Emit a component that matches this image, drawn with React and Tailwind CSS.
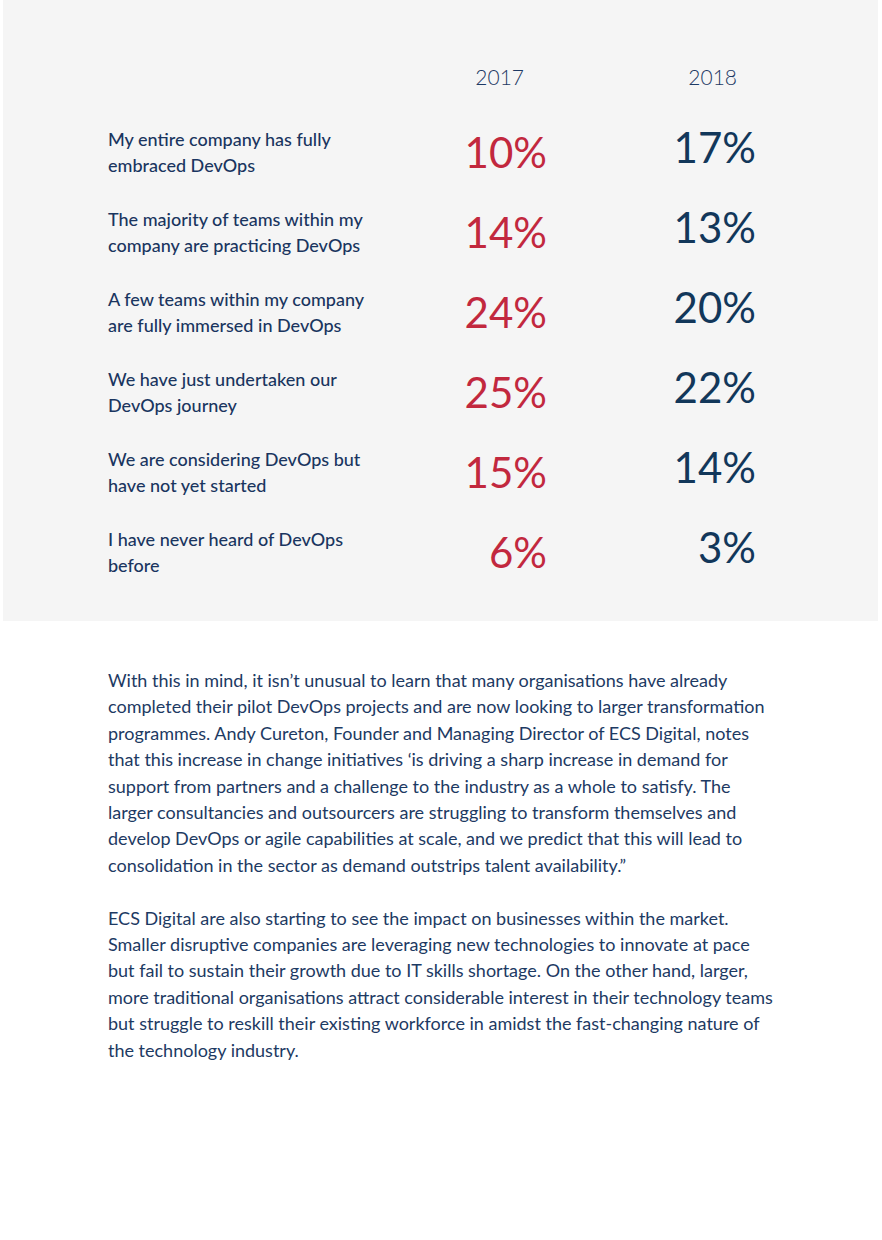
import React from 'react';

const rows = [
  { label: ['My entire company has fully', 'embraced DevOps'], a: '10%', b: '17%' },
  { label: ['The majority of teams within my', 'company are practicing DevOps'], a: '14%', b: '13%' },
  { label: ['A few teams within my company', 'are fully immersed in DevOps'], a: '24%', b: '20%' },
  { label: ['We have just undertaken our', 'DevOps journey'], a: '25%', b: '22%' },
  { label: ['We are considering DevOps but', 'have not yet started'], a: '15%', b: '14%' },
  { label: ['I have never heard of DevOps', 'before'], a: '6%', b: '3%' },
];

const para1 = [
  'With this in mind, it isn\u2019t unusual to learn that many organisations have already',
  'completed their pilot DevOps projects and are now looking to larger transformation',
  'programmes. Andy Cureton, Founder and Managing Director of ECS Digital, notes',
  'that this increase in change initiatives \u2018is driving a sharp increase in demand for',
  'support from partners and a challenge to the industry as a whole to satisfy. The',
  'larger consultancies and outsourcers are struggling to transform themselves and',
  'develop DevOps or agile capabilities at scale, and we predict that this will lead to',
  'consolidation in the sector as demand outstrips talent availability.\u201d',
];

const para2 = [
  'ECS Digital are also starting to see the impact on businesses within the market.',
  'Smaller disruptive companies are leveraging new technologies to innovate at pace',
  'but fail to sustain their growth due to IT skills shortage. On the other hand, larger,',
  'more traditional organisations attract considerable interest in their technology teams',
  'but struggle to reskill their existing workforce in amidst the fast-changing nature of',
  'the technology industry.',
];

const Row = ({ row }) => (
  <div className="flex items-center h-[52px]">
    <div className="w-[292px] text-[18px] leading-[26px] font-medium text-[#1a3560]">
      {row.label.map((l) => (
        <div key={l} className="whitespace-nowrap">{l}</div>
      ))}
    </div>
    <div className="w-[147px] text-right text-[42px] leading-none text-[#c2283e]">{row.a}</div>
    <div className="w-[209px] text-right text-[42px] leading-none text-[#12375a] pb-[10px]">{row.b}</div>
  </div>
);

export default function App() {
  return (
    <div className="w-[882px] min-h-[1240px] bg-white" style={{ fontFamily: 'Lato, "Open Sans", sans-serif' }}>
      {/* Survey table */}
      <div className="ml-[3px] w-[875px] h-[621px] bg-[#f5f5f5] pl-[105px] pt-[62px]">
        <div className="flex h-[30px] items-center text-[21px] font-light text-[#1e3a64]">
          <div className="w-[292px]" />
          <div className="w-[147px] text-right pr-[23px]">2017</div>
          <div className="w-[209px] text-right pr-[19px]">2018</div>
        </div>
        <div className="mt-[34px] flex flex-col gap-[28px]">
          {rows.map((r) => (
            <Row key={r.a + r.b} row={r} />
          ))}
        </div>
      </div>

      {/* Body copy */}
      <div className="pl-[108px] pt-[46px] text-[18px] leading-[26.4px] text-[#1d3a63]">
        <p>
          {para1.map((l) => (
            <span key={l} className="block whitespace-nowrap">{l}</span>
          ))}
        </p>
        <p className="mt-[26.4px]">
          {para2.map((l) => (
            <span key={l} className="block whitespace-nowrap">{l}</span>
          ))}
        </p>
      </div>
    </div>
  );
}
